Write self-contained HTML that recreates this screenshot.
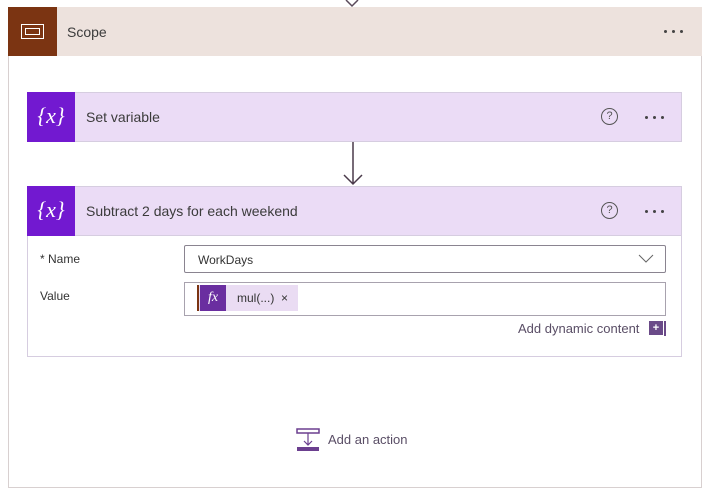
<!DOCTYPE html>
<html><head><style>
*{margin:0;padding:0;box-sizing:border-box}
body{width:708px;height:500px;background:#fff;font-family:"Liberation Sans",sans-serif;position:relative;overflow:hidden;color:#333}
.a{position:absolute}
.t{font-size:14px;color:#3b3b3b}
.dots{display:flex;gap:5px}
.dots i{width:3px;height:3px;background:#444;border-radius:50%;display:block}
.xi{color:#fff;font-family:"Liberation Serif",serif;font-size:22px;text-align:center;line-height:48px}
</style></head><body>
<svg class="a" style="left:344px;top:0" width="16" height="8"><path d="M2 0 L8 6 L14 0" stroke="#5a4a5a" stroke-width="1.5" fill="none"/></svg>
<div class="a" style="left:8px;top:7px;width:694px;height:481px;border:1px solid #d8d0d0"></div>
<div class="a" style="left:8px;top:7px;width:694px;height:49px;background:#ede2dd"></div>
<div class="a" style="left:8px;top:7px;width:49px;height:49px;background:#7b3412"></div>
<div class="a" style="left:21px;top:24px;width:23px;height:15px;border:1.5px solid #fff"></div>
<div class="a" style="left:25px;top:28px;width:15px;height:7px;border:1px solid #fff"></div>
<div class="a t" style="left:67px;top:24px">Scope</div>
<div class="a dots" style="left:664px;top:30px"><i></i><i></i><i></i></div>

<div class="a" style="left:27px;top:92px;width:655px;height:50px;background:#ebdcf6;border:1px solid #d6cde0"></div>
<div class="a xi" style="left:27px;top:92px;width:48px;height:50px;background:#7219d0"><i>{x}</i></div>
<div class="a t" style="left:86px;top:109px">Set variable</div>
<div class="a" style="left:601px;top:108px;width:17px;height:17px;border:1px solid #555;border-radius:50%;font-size:11px;text-align:center;line-height:15px;color:#555">?</div>
<div class="a dots" style="left:645px;top:116px"><i></i><i></i><i></i></div>

<svg class="a" style="left:342px;top:142px" width="22" height="44"><path d="M11 0 V42 M2 33 L11 42 L20 33" stroke="#4a3a4a" stroke-width="1.5" fill="none"/></svg>

<div class="a" style="left:27px;top:186px;width:655px;height:171px;border:1px solid #d6cde0"></div>
<div class="a" style="left:27px;top:186px;width:655px;height:50px;background:#ebdcf6;border:1px solid #d6cde0"></div>
<div class="a xi" style="left:27px;top:186px;width:48px;height:50px;background:#7219d0"><i>{x}</i></div>
<div class="a t" style="left:86px;top:203px">Subtract 2 days for each weekend</div>
<div class="a" style="left:601px;top:202px;width:17px;height:17px;border:1px solid #555;border-radius:50%;font-size:11px;text-align:center;line-height:15px;color:#555">?</div>
<div class="a dots" style="left:645px;top:210px"><i></i><i></i><i></i></div>

<div class="a" style="left:40px;top:252px;font-size:12px;color:#333">* Name</div>
<div class="a" style="left:40px;top:289px;font-size:12px;color:#333">Value</div>
<div class="a" style="left:184px;top:245px;width:482px;height:28px;border:1px solid #8a8490;border-radius:2px"></div>
<div class="a" style="left:198px;top:253px;font-size:12px;color:#333">WorkDays</div>
<svg class="a" style="left:638px;top:254px" width="16" height="10"><path d="M1 1 L8 8 L15 1" stroke="#666" fill="none"/></svg>
<div class="a" style="left:184px;top:282px;width:482px;height:34px;border:1px solid #a8a2ae"></div>
<div class="a" style="left:197px;top:285px;width:2px;height:26px;background:#7b3412"></div>
<div class="a" style="left:199px;top:285px;width:99px;height:26px;background:#eadcf3"></div>
<div class="a" style="left:200px;top:285px;width:26px;height:26px;background:#6a2ea0;color:#fff;font-family:'Liberation Serif',serif;font-style:italic;font-size:14px;text-align:center;line-height:26px">fx</div>
<div class="a" style="left:237px;top:291px;font-size:12px;color:#333">mul(...)&nbsp; ×</div>
<div class="a" style="left:518px;top:321px;font-size:13px;color:#5a4e66">Add dynamic content</div>
<div class="a" style="left:649px;top:321px;width:14px;height:14px;background:#6a4a88;color:#fff;font-size:11px;text-align:center;line-height:14px;font-weight:bold">+</div>
<div class="a" style="left:664px;top:321px;width:2px;height:15px;background:#6a4a88"></div>

<svg class="a" style="left:296px;top:428px" width="24" height="24"><rect x="1" y="1" width="22" height="4" fill="none" stroke="#6b3f8f" stroke-width="1.5"/><path d="M12 5 V17 M8 13 L12 17 L16 13" stroke="#6b3f8f" stroke-width="1.2" fill="none"/><rect x="1" y="19" width="22" height="4" fill="#6b3f8f"/></svg>
<div class="a" style="left:328px;top:432px;font-size:13px;color:#5a4e66">Add an action</div>
</body></html>
